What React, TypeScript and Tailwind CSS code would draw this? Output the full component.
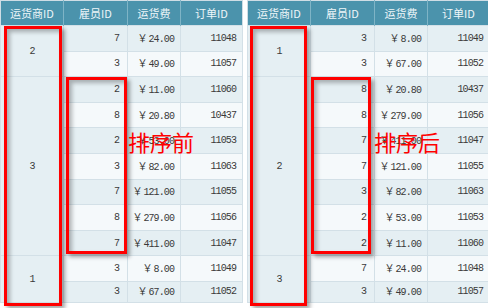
import React from "react";

type Row = { carrier: number; emp: number; fee: string; order: number };

const before: Row[] = [
  { carrier: 2, emp: 7, fee: "24.00", order: 11048 },
  { carrier: 2, emp: 3, fee: "49.00", order: 11057 },
  { carrier: 3, emp: 2, fee: "11.00", order: 11060 },
  { carrier: 3, emp: 8, fee: "20.80", order: 10437 },
  { carrier: 3, emp: 2, fee: "53.00", order: 11053 },
  { carrier: 3, emp: 3, fee: "82.00", order: 11063 },
  { carrier: 3, emp: 7, fee: "121.00", order: 11055 },
  { carrier: 3, emp: 8, fee: "279.00", order: 11056 },
  { carrier: 3, emp: 7, fee: "411.00", order: 11047 },
  { carrier: 1, emp: 3, fee: "8.00", order: 11049 },
  { carrier: 1, emp: 3, fee: "67.00", order: 11052 },
];

const after: Row[] = [
  { carrier: 1, emp: 3, fee: "8.00", order: 11049 },
  { carrier: 1, emp: 3, fee: "67.00", order: 11052 },
  { carrier: 2, emp: 8, fee: "20.80", order: 10437 },
  { carrier: 2, emp: 8, fee: "279.00", order: 11056 },
  { carrier: 2, emp: 7, fee: "411.00", order: 11047 },
  { carrier: 2, emp: 7, fee: "121.00", order: 11055 },
  { carrier: 2, emp: 3, fee: "82.00", order: 11063 },
  { carrier: 2, emp: 2, fee: "53.00", order: 11053 },
  { carrier: 2, emp: 2, fee: "11.00", order: 11060 },
  { carrier: 3, emp: 7, fee: "24.00", order: 11048 },
  { carrier: 3, emp: 3, fee: "49.00", order: 11057 },
];

// how many rows each carrier cell spans, keyed by first row index
function spans(rows: Row[]) {
  const out: Record<number, number> = {};
  let start = 0;
  rows.forEach((r, i) => {
    if (i > 0 && r.carrier !== rows[i - 1].carrier) start = i;
    out[start] = (out[start] || 0) + 1;
  });
  return out;
}

const num = "font-['Liberation_Mono',monospace] text-[10px] tracking-[-0.9px] text-[#3a3a3a]";

function OrderTable({ rows }: { rows: Row[] }) {
  const span = spans(rows);
  return (
    <table className="table-fixed border-collapse w-[242px] border border-[#cfdde5]">
      <colgroup>
        <col className="w-[63px]" />
        <col className="w-[64px]" />
        <col className="w-[53px]" />
        <col className="w-[62px]" />
      </colgroup>
      <thead>
        <tr className="h-[25px] bg-[#4b93ac] text-[#eef6f9] text-[11px] font-['Noto_Sans_CJK_SC',sans-serif]">
          <th className="font-normal border-r border-[#7fb4c6]">运货商ID</th>
          <th className="font-normal border-r border-[#7fb4c6]">雇员ID</th>
          <th className="font-normal border-r border-[#7fb4c6]">运货费</th>
          <th className="font-normal">订单ID</th>
        </tr>
      </thead>
      <tbody>
        {rows.map((r, i) => (
          <tr
            key={r.order}
            className={`${i === rows.length - 1 ? "h-[21px]" : "h-[25.6px]"} ${i % 2 === 0 ? "bg-[#e5eff3]" : "bg-[#f5f9fb]"}`}
          >
            {span[i] && (
              <td rowSpan={span[i]} className={`bg-[#e5eff3] border border-[#d3e0e7] text-center ${num}`}>
                {r.carrier}
              </td>
            )}
            <td className={`border border-[#d3e0e7] text-right pr-[8px] ${num}`}>{r.emp}</td>
            <td className={`border border-[#d3e0e7] text-right pr-[6px] ${num}`}>
              <span className="font-['Noto_Sans_CJK_SC',sans-serif] text-[10px] tracking-normal mr-[1px]">￥</span>
              {r.fee}
            </td>
            <td className={`border border-[#d3e0e7] text-right pr-[6px] ${num}`}>{r.order}</td>
          </tr>
        ))}
      </tbody>
    </table>
  );
}

const box =
  "absolute border-[3px] border-[#ff0000] shadow-[3px_3px_4px_rgba(0,0,0,0.35),inset_3px_3px_4px_rgba(0,0,0,0.28)]";
const label =
  "absolute text-[22px] leading-none text-[#ff0000] font-['Noto_Sans_CJK_SC',sans-serif]";

export default function App() {
  return (
    <div className="relative w-[488px] h-[308px] bg-white overflow-hidden flex gap-[4px] items-start">
      <OrderTable rows={before} />
      <OrderTable rows={after} />

      <div className={`${box} left-[4px] top-[26px] w-[58px] h-[280px]`} />
      <div className={`${box} left-[66px] top-[77px] w-[61px] h-[177px]`} />
      <div className={`${box} left-[250px] top-[26px] w-[57px] h-[280px]`} />
      <div className={`${box} left-[311px] top-[77px] w-[60px] h-[177px]`} />

      <span className={`${label} left-[128px] top-[130px]`}>排序前</span>
      <span className={`${label} left-[374px] top-[130px]`}>排序后</span>
    </div>
  );
}
